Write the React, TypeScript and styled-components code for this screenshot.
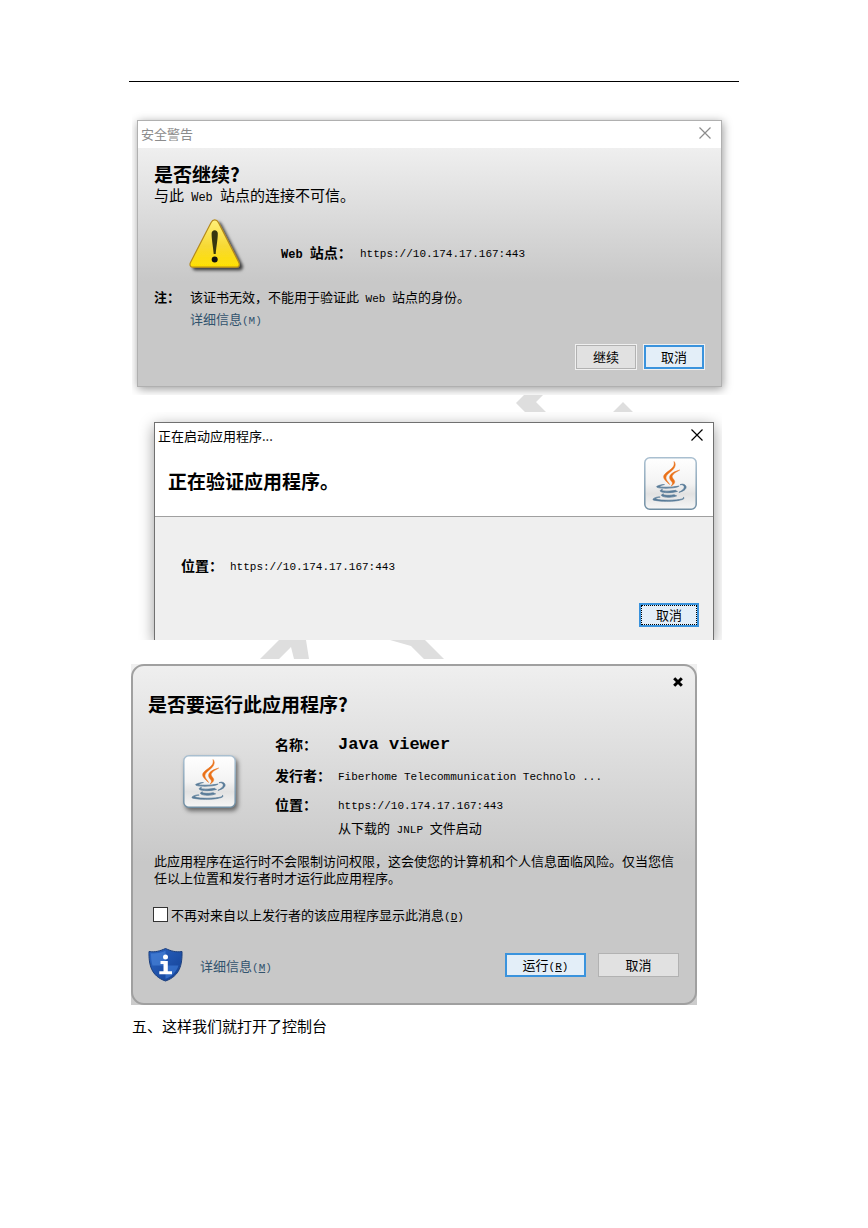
import React from "react";
import styled, { createGlobalStyle, css } from "styled-components";

const GlobalStyle = createGlobalStyle`
  *, *::before, *::after { box-sizing: border-box; }
  body {
    margin: 0;
    background: #fff;
    color: #000;
    font-family: "Noto Sans CJK SC", sans-serif;
    font-size: 13px;
  }
  h2, p, dl, dd, dt, figure { margin: 0; }
`;

const Page = styled.main`
  padding: 81px 129px 180px;
`;

const TopRule = styled.hr`
  margin: 0 0 29px;
  border: 0;
  border-top: 1px solid #000;
`;

const Mono = styled.span<{ $size?: number }>`
  font-family: "Liberation Mono", "Noto Sans CJK SC", monospace;
  font-size: ${(p) => p.$size ?? 11}px;
  line-height: 1;
`;

const WarningFigure = styled.figure`
  margin: 0 3px;
  padding: 9px 14px 8px 5px;
  overflow: hidden;
`;

const ProgressFigure = styled.figure`
  margin: 0 17px 0 9px;
  padding: 10px 8px 0 16px;
  overflow: hidden;
`;

const RunFigure = styled.figure`
  margin: 5px 42px 0 2px;
  background: linear-gradient(#f0f0f0, #cbcbcb);
`;

const WarningDialog = styled.section`
  border: 1px solid #b0b0b0;
  box-shadow: 1px 2px 9px rgba(0, 0, 0, 0.4);
  background: #fff;
`;

const ProgressDialog = styled.section`
  border: 1px solid #707070;
  border-bottom: 0;
  box-shadow: 0 4px 14px rgba(0, 0, 0, 0.4);
  background: #efefef;
`;

const RunDialog = styled.section`
  border: 2px solid #a0a0a0;
  border-radius: 13px;
  padding: 0 16px 21px 15px;
  background: linear-gradient(#efefef, #c8c8c8 58%);
`;

const TitleBar = styled.header<{ $muted?: boolean }>`
  display: flex;
  justify-content: space-between;
  align-items: center;
  height: 27px;
  padding: 0 10px 3px 3px;
  background: #fff;
  color: ${(p) => (p.$muted ? "#8c8c8c" : "#000")};
`;

const CloseButton = styled.button`
  display: flex;
  padding: 0;
  border: 0;
  background: none;
  color: inherit;
`;

const Heading = styled.h2`
  font-size: 19px;
  line-height: 24px;
  font-weight: 700;
`;

const WarningBody = styled.div`
  padding: 14px 17px 17px 16px;
  background: linear-gradient(#efefef, #c8c8c8 56%);
`;

const Subtitle = styled.p`
  font-size: 15px;
  line-height: 18px;
`;

const SiteRow = styled.div`
  display: flex;
  align-items: flex-start;
  gap: 35px;
  margin: 14px 0 12px 34px;
`;

const SiteInfo = styled.dl`
  display: grid;
  grid-template-columns: 79px auto;
  padding-top: 24px;
`;

const Label = styled.dt`
  font-size: 14px;
  line-height: 20px;
  font-weight: 700;
`;

const Value = styled.dd`
  line-height: 20px;
`;

const Notes = styled.dl`
  display: grid;
  grid-template-columns: 36px auto;
  margin-bottom: 15px;
  line-height: 22px;
`;

const DetailLink = styled.a`
  color: #32536e;
  text-decoration: none;
`;

const Actions = styled.div<{ $gap?: number }>`
  display: flex;
  justify-content: flex-end;
  gap: ${(p) => p.$gap ?? 8}px;
`;

const Button = styled.button<{ $primary?: boolean; $wide?: boolean; $ringed?: boolean; $focused?: boolean }>`
  display: flex;
  justify-content: center;
  align-items: center;
  width: ${(p) => (p.$wide ? 81 : 60)}px;
  height: 24px;
  padding: 0;
  border: ${(p) => (p.$primary ? "2px solid #3a93dd" : "1px solid #b2b2b2")};
  background: ${(p) => (p.$primary ? "#e3eef8" : "#e1e1e1")};
  color: #000;
  font-family: inherit;
  font-size: 13px;
  line-height: 18px;
  ${(p) => p.$ringed && css`box-shadow: 0 0 0 1px #f0f0f0;`}
  ${(p) =>
    p.$focused &&
    css`
      outline: 1px dotted #000;
      outline-offset: -3px;
    `}
`;

const WatermarkStrip = styled.svg`
  display: block;
  fill: #dedede;
`;

const ProgressHeader = styled.div`
  display: flex;
  justify-content: space-between;
  align-items: flex-start;
  height: 67px;
  padding: 7px 16px 0 13px;
  border-bottom: 1px solid #a0a0a0;
  background: #fff;
`;

const ProgressTitle = styled(Heading)`
  padding-top: 12px;
`;

const ProgressBody = styled.div`
  padding: 38px 14px 13px 26px;
`;

const ProgressInfo = styled.dl`
  display: grid;
  grid-template-columns: 49px auto;
  margin-bottom: 28px;
`;

const RunHeader = styled.header`
  display: flex;
  justify-content: space-between;
  align-items: flex-start;
  height: 50px;
  padding-top: 11px;
  margin-right: -4px;
`;

const RunTitle = styled(Heading)`
  padding-top: 15px;
`;

const RunInfo = styled.div`
  display: flex;
  gap: 36px;
  padding-left: 35px;
`;

const LogoCell = styled.div`
  width: 56px;
  padding-top: 39px;
  filter: drop-shadow(2px 3px 2px rgba(0, 0, 0, 0.5));
`;

const LogoSvg = styled.svg`
  display: block;
  flex: none;
`;

const RunDetails = styled.dl`
  display: grid;
  grid-template-columns: 63px auto;
  grid-template-rows: 32px 30px 28px 20px;
  align-items: center;
  padding-top: 12px;
`;

const SourceNote = styled(Value)`
  grid-column: 2;
`;

const RiskText = styled.p`
  margin: 14px 0 20px 6px;
  line-height: 17px;
`;

const CheckRow = styled.div`
  display: flex;
  align-items: center;
  gap: 3px;
  height: 16px;
  margin: 0 0 26px 5px;
`;

const CheckBox = styled.input`
  appearance: none;
  width: 15px;
  height: 15px;
  margin: 0;
  border: 1px solid #333;
  background: #fff;
`;

const RunFooter = styled.footer`
  display: flex;
  align-items: center;
  justify-content: space-between;
`;

const FooterInfo = styled.div`
  display: flex;
  align-items: center;
  gap: 17px;
`;

const Closing = styled.p`
  margin: 9px 0 0 3px;
  font-size: 15px;
  line-height: 24px;
`;

const ThinCross = () => (
  <svg width="12" height="12" viewBox="0 0 12 12" stroke="currentColor" strokeWidth="1.2" fill="none">
    <path d="M.5 .5l11 11M11.5 .5l-11 11" />
  </svg>
);

const BoldCross = () => (
  <svg width="10" height="10" viewBox="0 0 10 10" stroke="#000" strokeWidth="3" fill="none">
    <path d="M1.2 1.2l7.6 7.6M8.8 1.2l-7.6 7.6" />
  </svg>
);

const WarningIcon = () => (
  <svg width="58" height="56" viewBox="0 0 58 56">
    <defs>
      <linearGradient id="warnFill" x1="0" y1="0" x2="0" y2="1">
        <stop offset="0" stopColor="#fff07a" />
        <stop offset=".55" stopColor="#f7d935" />
        <stop offset="1" stopColor="#ffe000" />
      </linearGradient>
      <filter id="warnShadow" x="-20%" y="-20%" width="150%" height="150%">
        <feDropShadow dx="3" dy="2.5" stdDeviation="1.6" floodOpacity=".7" />
      </filter>
    </defs>
    <path
      d="M26.8 1.8c1.8 0 2.8 1 3.6 2.6l20.3 39.8c1.3 2.6.4 5-2.4 5H5c-2.8 0-3.7-2.4-2.4-5L23.1 4.4c.8-1.6 1.9-2.6 3.7-2.6z"
      fill="url(#warnFill)"
      stroke="#b58a1c"
      strokeWidth="1.2"
      filter="url(#warnShadow)"
    />
    <path d="M23.6 15.5c0-2 1.3-3.3 3.1-3.3s3.1 1.3 3.1 3.3c0 6-1.3 11.5-2.1 20.5h-2c-.8-9-2.1-14.5-2.1-20.5z" fill="#37360f" />
    <circle cx="26.7" cy="41.6" r="3" fill="#111" />
  </svg>
);

const JavaLogo = ({ id }: { id: string }) => (
  <LogoSvg width="53" height="53" viewBox="0 0 53 53">
    <defs>
      <linearGradient id={`${id}Fill`} x1="0" y1="0" x2="0" y2="1">
        <stop offset="0" stopColor="#fff" />
        <stop offset=".5" stopColor="#f3f3f3" />
        <stop offset=".7" stopColor="#e2e2e2" />
        <stop offset="1" stopColor="#f6f6f6" />
      </linearGradient>
      <linearGradient id={`${id}Edge`} x1="0" y1="0" x2="0" y2="1">
        <stop offset="0" stopColor="#a9bfd0" />
        <stop offset="1" stopColor="#708ea3" />
      </linearGradient>
    </defs>
    <rect x=".8" y=".8" width="51.4" height="51.4" rx="5" fill={`url(#${id}Fill)`} stroke={`url(#${id}Edge)`} strokeWidth="1.5" />
    <g transform="translate(2.5 4) scale(.36 .335)">
      <g fill="#587b98" stroke="#587b98" strokeWidth="2">
        <path d="M47.617 98.12s-4.767 2.774 3.397 3.71c9.892 1.13 14.947.968 25.845-1.092 0 0 2.871 1.795 6.873 3.351-24.439 10.47-55.308-.607-36.115-5.969zm-2.988-13.665s-5.348 3.959 2.823 4.805c10.567 1.091 18.91 1.18 33.354-1.6 0 0 1.993 2.025 5.132 3.131-29.542 8.64-62.446.68-41.309-6.336z" />
        <path d="M102.123 108.229s3.529 2.91-3.888 5.159c-14.102 4.272-58.706 5.56-71.094.171-4.451-1.938 3.899-4.625 6.526-5.192 2.739-.593 4.303-.485 4.303-.485-4.953-3.487-32.013 6.85-13.743 9.815 49.821 8.076 90.817-3.637 77.896-9.468zM49.912 70.294s-22.686 5.389-8.033 7.348c6.188.828 18.518.638 30.011-.326 9.39-.789 18.813-2.474 18.813-2.474s-3.308 1.419-5.704 3.053c-23.042 6.061-67.544 3.238-54.731-2.958 10.832-5.239 19.644-4.643 19.644-4.643zM90.609 93.041c23.421-12.167 12.591-23.86 5.032-22.285-1.848.385-2.677.72-2.677.72s.688-1.079 2-1.543c14.953-5.255 26.451 15.503-4.823 23.725 0-.002.359-.327.468-.617z" />
      </g>
      <g fill="#ea7118" stroke="#ea7118" strokeWidth="1.5">
        <path d="M69.802 61.271c6.025 6.935-1.58 13.17-1.58 13.17s15.289-7.891 8.269-17.777c-6.559-9.215-11.587-13.792 15.635-29.58 0 .001-42.731 10.67-22.324 34.187z" />
        <path d="M76.491 1.587s12.968 12.976-12.303 32.923c-20.266 16.006-4.621 25.13-.007 35.559-11.831-10.673-20.509-20.07-14.688-28.815 8.548-12.834 32.229-19.059 26.998-39.667z" />
      </g>
    </g>
  </LogoSvg>
);

const ShieldIcon = () => (
  <svg width="35" height="34" viewBox="0 0 35 34">
    <defs>
      <linearGradient id="shieldFill" x1="0" y1="0" x2="1" y2="1">
        <stop offset="0" stopColor="#2c66c4" />
        <stop offset="1" stopColor="#123f93" />
      </linearGradient>
    </defs>
    <path
      d="M1 3.5c6 1 11-.5 16.500-3 5.500 2.500 10.500 4 16.500 3 .3 13-2 24.500-16.500 29.500C3 28 .7 16.500 1 3.500z"
      fill="url(#shieldFill)"
      stroke="#1c3f7c"
      strokeWidth="1"
    />
    <path d="M3 5.500c5.500.5 10-.7 14.500-2.700V17.500H4.500C3.300 13.500 3 9.500 3 5.500z" fill="#4a84d8" opacity=".65" />
    <path d="M17.500 17.500h13c-2 6-5.800 10.500-13 13.300z" fill="#3d7bd6" opacity=".65" />
    <circle cx="17.5" cy="9" r="2.5" fill="#fff" />
    <path d="M12.500 13h7.300v10.300H24v2.900H11.300v-2.900h4.200v-7.400h-3z" fill="#fff" />
  </svg>
);

const SITE_URL = "https://10.174.17.167:443";

export default function App() {
  return (
    <>
      <GlobalStyle />
      <Page>
        <TopRule />

        <WarningFigure>
          <WarningDialog>
            <TitleBar $muted>
              <span>安全警告</span>
              <CloseButton aria-label="关闭"><ThinCross /></CloseButton>
            </TitleBar>
            <WarningBody>
              <Heading>是否继续?</Heading>
              <Subtitle>与此<Mono $size={12}> Web </Mono>站点的连接不可信。</Subtitle>
              <SiteRow>
                <WarningIcon />
                <SiteInfo>
                  <Label><Mono $size={12}>Web </Mono>站点：</Label>
                  <Value><Mono>{SITE_URL}</Mono></Value>
                </SiteInfo>
              </SiteRow>
              <Notes>
                <dt><b>注：</b></dt>
                <dd>
                  该证书无效，不能用于验证此<Mono> Web </Mono>站点的身份。
                  <br />
                  <DetailLink href="#details">详细信息<Mono>(M)</Mono></DetailLink>
                </dd>
              </Notes>
              <Actions>
                <Button $ringed>继续</Button>
                <Button $primary $ringed>取消</Button>
              </Actions>
            </WarningBody>
          </WarningDialog>
        </WarningFigure>

        <WatermarkStrip width="610" height="17" viewBox="129 395 610 17">
          <path d="M524 395h19l-7 7 10 10h-21l-9-9zM623 402l10 10h-20z" />
        </WatermarkStrip>

        <ProgressFigure>
          <ProgressDialog>
            <TitleBar>
              <span>正在启动应用程序...</span>
              <CloseButton aria-label="关闭"><ThinCross /></CloseButton>
            </TitleBar>
            <ProgressHeader>
              <ProgressTitle>正在验证应用程序。</ProgressTitle>
              <JavaLogo id="progressJava" />
            </ProgressHeader>
            <ProgressBody>
              <ProgressInfo>
                <Label>位置：</Label>
                <Value><Mono>{SITE_URL}</Mono></Value>
              </ProgressInfo>
              <Actions>
                <Button $primary $focused>取消</Button>
              </Actions>
            </ProgressBody>
          </ProgressDialog>
        </ProgressFigure>

        <WatermarkStrip width="610" height="19" viewBox="129 640 610 19">
          <path d="M279 640h27l3 19h-15l-3-12-12 12h-19zM390 640h35l19 19h-20l-13-13z" />
        </WatermarkStrip>

        <RunFigure>
          <RunDialog>
            <RunHeader>
              <RunTitle>是否要运行此应用程序?</RunTitle>
              <CloseButton aria-label="关闭"><BoldCross /></CloseButton>
            </RunHeader>
            <RunInfo>
              <LogoCell><JavaLogo id="runJava" /></LogoCell>
              <RunDetails>
                <Label>名称：</Label>
                <Value><Mono as="b" $size={17}>Java viewer</Mono></Value>
                <Label>发行者：</Label>
                <Value><Mono>Fiberhome Telecommunication Technolo ...</Mono></Value>
                <Label>位置：</Label>
                <Value><Mono>{SITE_URL}</Mono></Value>
                <SourceNote>从下载的<Mono> JNLP </Mono>文件启动</SourceNote>
              </RunDetails>
            </RunInfo>
            <RiskText>
              此应用程序在运行时不会限制访问权限，这会使您的计算机和个人信息面临风险。仅当您信任以上位置和发行者时才运行此应用程序。
            </RiskText>
            <CheckRow>
              <CheckBox type="checkbox" id="suppress" />
              <label htmlFor="suppress">
                不再对来自以上发行者的该应用程序显示此消息<Mono>(<u>D</u>)</Mono>
              </label>
            </CheckRow>
            <RunFooter>
              <FooterInfo>
                <ShieldIcon />
                <DetailLink href="#more">详细信息<Mono>(<u>M</u>)</Mono></DetailLink>
              </FooterInfo>
              <Actions $gap={12}>
                <Button $primary $wide><span>运行<Mono>(<u>R</u>)</Mono></span></Button>
                <Button $wide>取消</Button>
              </Actions>
            </RunFooter>
          </RunDialog>
        </RunFigure>

        <Closing>五、这样我们就打开了控制台</Closing>
      </Page>
    </>
  );
}
